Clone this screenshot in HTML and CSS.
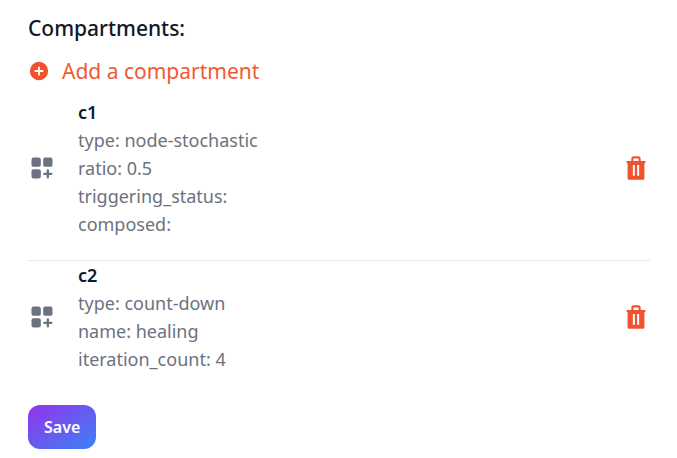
FILE: index.html
```html
<!DOCTYPE html>
<html lang="en">
<head>
<meta charset="utf-8">
<meta name="viewport" content="width=device-width, initial-scale=1">
<title>Compartments</title>
<link rel="stylesheet" href="styles.css">
</head>
<body>
<svg class="sprite" aria-hidden="true">
  <symbol id="grid-plus" viewBox="0 0 24 24">
    <rect x="3" y="3" width="8" height="8" rx="1.857"/>
    <rect x="13" y="3" width="8" height="8" rx="1.857"/>
    <rect x="3" y="13" width="8" height="8" rx="1.857"/>
    <path d="M18 14a1 1 0 1 0-2 0v2h-2a1 1 0 1 0 0 2h2v2a1 1 0 1 0 2 0v-2h2a1 1 0 1 0 0-2h-2v-2Z"/>
  </symbol>
  <symbol id="trash" viewBox="0 0 24 24">
    <path fill-rule="evenodd" d="M8.5 2.6A2 2 0 0 1 10 2h4a2 2 0 0 1 2 2v2h4v2h-.8v12.800a1.200 1.200 0 0 1-1.200 1.200H6a1.200 1.200 0 0 1-1.200-1.200V8H4V6h4V4a2 2 0 0 1 .5-1.400ZM9.800 6h4.400V3.800H9.800V6ZM9.300 9.500v9.200h1.700V9.500H9.300Zm3.700 0v9.200h1.700V9.500H13Z"/>
  </symbol>
</svg>
<main class="panel">
  <h2 class="title">Compartments:</h2>
  <button type="button" class="add">
    <svg class="add-icon" viewBox="0 0 24 24" aria-hidden="true"><path fill-rule="evenodd" d="M2 12a10 10 0 1 1 20 0 10 10 0 0 1-20 0Zm11-4a1 1 0 1 0-2 0v3H8a1 1 0 1 0 0 2h3v3a1 1 0 1 0 2 0v-3h3a1 1 0 1 0 0-2h-3V8Z"/></svg>
    Add a compartment
  </button>
  <ul class="list">
    <li class="item">
      <svg class="icon" aria-hidden="true"><use href="#grid-plus"/></svg>
      <div class="details">
        <h3 class="name">c1</h3>
        <p>type: node-stochastic</p>
        <p>ratio: 0.5</p>
        <p>triggering_status:</p>
        <p>composed:</p>
      </div>
      <button type="button" class="delete" aria-label="Delete c1"><svg class="icon" aria-hidden="true"><use href="#trash"/></svg></button>
    </li>
    <li class="item">
      <svg class="icon" aria-hidden="true"><use href="#grid-plus"/></svg>
      <div class="details">
        <h3 class="name">c2</h3>
        <p>type: count-down</p>
        <p>name: healing</p>
        <p>iteration_count: 4</p>
      </div>
      <button type="button" class="delete" aria-label="Delete c2"><svg class="icon" aria-hidden="true"><use href="#trash"/></svg></button>
    </li>
  </ul>
  <button type="submit" class="save">Save</button>
</main>
</body>
</html>
```
FILE: styles.css
```css
* {
  box-sizing: border-box;
  margin: 0;
  padding: 0;
}

body {
  background: #fff;
  color: #6b7280;
  font-family: "Segoe UI", "Noto Sans", sans-serif;
  font-size: 18px;
  line-height: 28px;
}

button {
  border: 0;
  background: none;
  font: inherit;
  cursor: pointer;
}

.sprite {
  display: none;
}

.panel {
  padding: 12px 27px 8px 28px;
}

.title {
  color: #111827;
  font-size: 21px;
  font-weight: 500;
  line-height: 32px;
}

.add {
  display: flex;
  align-items: center;
  gap: 12px;
  margin: 11px 0;
  color: #f05a32;
  font-size: 21px;
  line-height: 32px;
}

.add-icon {
  width: 22px;
  height: 22px;
  fill: #f05230;
}

.list {
  list-style: none;
}

.item {
  display: flex;
  align-items: center;
  gap: 22px;
  padding-bottom: 22px;
}

.item:last-child {
  padding-bottom: 0;
}

.item + .item {
  border-top: 1px solid #e5e7eb;
}

.details {
  flex: 1;
}

.name {
  color: #111827;
  font-size: 18px;
  font-weight: 600;
}

.icon {
  display: block;
  width: 28px;
  height: 28px;
  fill: #6b7280;
}

.delete .icon {
  fill: #f05230;
}

.save {
  margin-top: 32px;
  padding: 8px 16px;
  border-radius: 12px;
  background: linear-gradient(to bottom right, #9333ea, #3b82f6);
  color: #fff;
  font-size: 16px;
  font-weight: 600;
}
```
